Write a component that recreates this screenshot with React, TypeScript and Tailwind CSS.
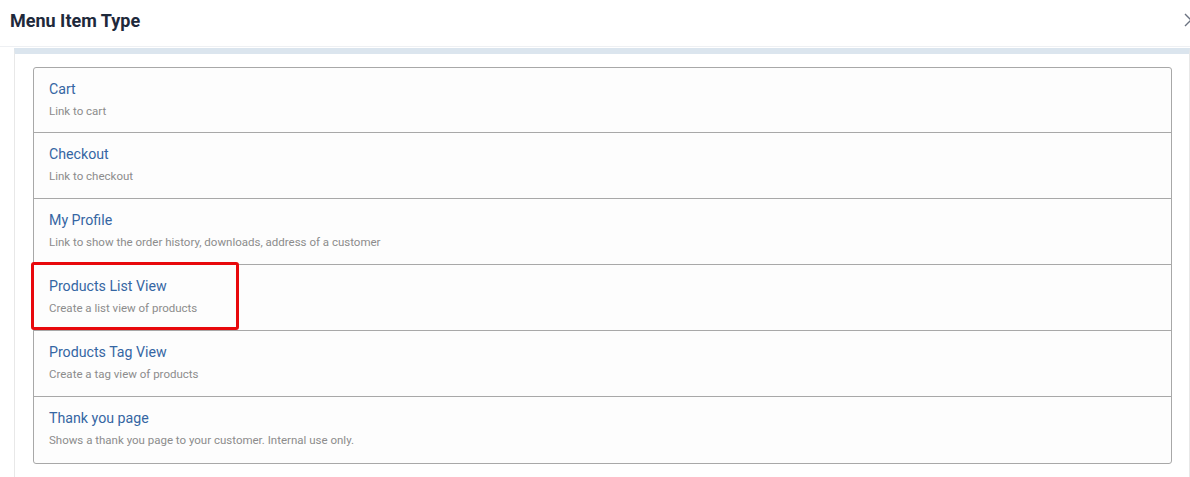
const items = [
  { title: "Cart", text: "Link to cart" },
  { title: "Checkout", text: "Link to checkout" },
  { title: "My Profile", text: "Link to show the order history, downloads, address of a customer" },
  { title: "Products List View", text: "Create a list view of products", marked: true },
  { title: "Products Tag View", text: "Create a tag view of products" },
  { title: "Thank you page", text: "Shows a thank you page to your customer. Internal use only." },
];

export default function App() {
  return (
    <div className="h-[477px] w-[1190px] overflow-hidden bg-white font-['Roboto',sans-serif]">
      {/* modal header */}
      <div className="flex h-[47px] items-center justify-between border-b border-[#eef0f3] pb-[6px] pl-[10px]">
        <h3 className="text-[18px] font-bold text-[#1e293b]">Menu Item Type</h3>
        <svg className="mr-[-8px] h-[14px] w-[14px] text-[#6b7280]" viewBox="0 0 14 14" fill="none" stroke="currentColor" strokeWidth="1.4">
          <path d="M1 1l12 12M13 1L1 13" />
        </svg>
      </div>

      {/* modal body */}
      <div className="mt-px pl-[14px]">
        <div className="h-[440px] border-x border-t-[6px] border-[#e8e8e8] border-t-[#dbe5ee] pb-4 pl-[18px] pr-[17px] pt-[13px]">
          <div className="divide-y divide-[#a8a8a8] rounded-[3px] border border-[#a8a8a8] bg-[#fdfdfd]">
            {items.map((item) => (
              <div key={item.title} className="relative h-[66px] px-[15px] pt-[11px] first:h-[65px]">
                <div className="text-[14.2px] leading-[20px] text-[#3566a3]">{item.title}</div>
                <div className="mt-[4px] text-[11.5px] leading-[16px] text-[#8c8c8c]">{item.text}</div>
                {item.marked && (
                  <div className="pointer-events-none absolute left-[-3px] top-[-3px] h-[68px] w-[208px] rounded-[3px] border-[3px] border-[#e8080c]" />
                )}
              </div>
            ))}
          </div>
        </div>
      </div>
    </div>
  );
}
